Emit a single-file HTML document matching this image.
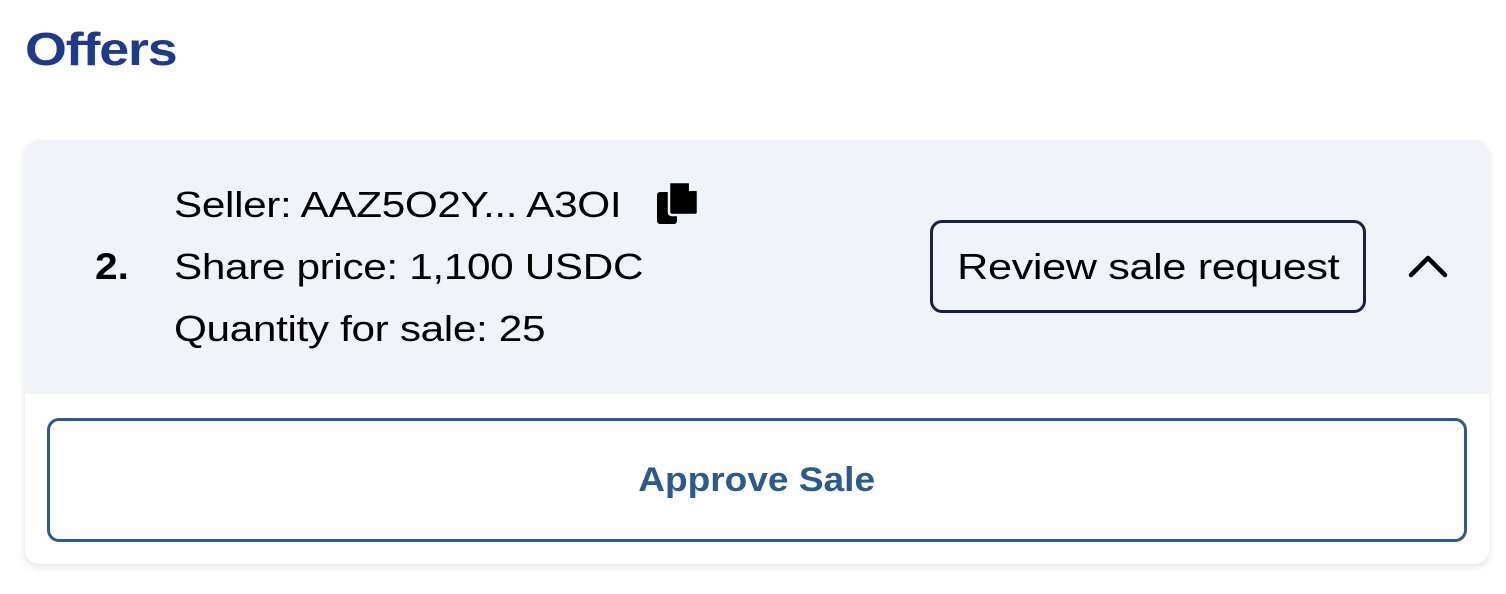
<!DOCTYPE html>
<html><head><style>
body{margin:0;width:1506px;height:594px;background:#fff;font-family:"Liberation Sans",sans-serif;position:relative;overflow:hidden}
h1{position:absolute;left:25px;top:22px;margin:0;font-size:46px;font-weight:bold;color:#1e3a8a;letter-spacing:-1px;transform:scaleX(1.17);transform-origin:left}
.card{position:absolute;left:25px;top:140px;width:1464px;height:424px;background:#fff;border-radius:14px;box-shadow:0 3px 8px rgba(0,0,0,0.12)}
.head{position:absolute;left:0;top:0;width:1464px;height:254px;background:#f0f3f8;border-radius:14px 14px 0 0}
.num{position:absolute;left:70px;top:106px;font-size:37px;font-weight:bold;color:#000;transform:scaleX(1.1);transform-origin:left}
.line{position:absolute;left:149px;font-size:36px;color:#000;white-space:nowrap;letter-spacing:-0.3px;transform:scaleX(1.175);transform-origin:left}
.rev{position:absolute;left:905px;top:80px;width:430px;height:87px;border:3px solid #1a1f45;border-radius:12px;color:#000;text-align:center;line-height:87px}
.rev span{display:inline-block;font-size:36px;letter-spacing:-0.3px;transform:scaleX(1.2)}
.appr{position:absolute;left:22px;top:278px;width:1414px;height:118px;border:3px solid #2b5a8e;border-radius:12px;color:#2b5a8e;text-align:center;line-height:118px}
.appr span{display:inline-block;font-size:34px;font-weight:bold;transform:scaleX(1.09)}
</style></head><body>
<h1>Offers</h1>
<div class="card">
 <div class="head">
  <div class="num">2.</div>
  <div class="line" style="top:44px">Seller: AAZ5O2Y... A3OI</div>
  <svg style="position:absolute;left:630px;top:40px" width="46" height="46" viewBox="0 0 46 46">
   <rect x="2" y="12" width="20" height="32" rx="3" fill="#000"/>
   <path d="M14 2 H34 L43 11 V32 Q43 35 40 35 H17 Q14 35 14 32 Z" fill="#000" stroke="#f0f3f8" stroke-width="2.5"/>
   <path d="M34 2 V11 H43" fill="#f0f3f8"/>
  </svg>
  <div class="line" style="top:106px">Share price: 1,100 USDC</div>
  <div class="line" style="top:168px">Quantity for sale: 25</div>
  <div class="rev"><span>Review sale request</span></div>
  <svg style="position:absolute;left:1382px;top:110px" width="44" height="30" viewBox="0 0 44 30"><path d="M4 25 L21 8 L38 25" fill="none" stroke="#000" stroke-width="4.5" stroke-linecap="round" stroke-linejoin="round"/></svg>
 </div>
 <div class="appr"><span>Approve Sale</span></div>
</div>
</body></html>
